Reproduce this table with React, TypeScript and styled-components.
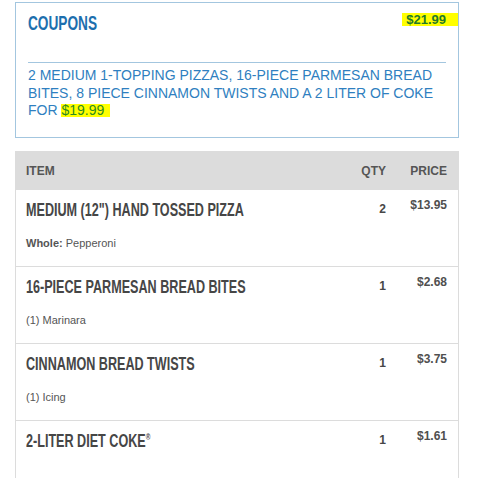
import React from "react";
import styled, { createGlobalStyle } from "styled-components";

const Global = createGlobalStyle`
  html, body {
    margin: 0;
    padding: 0;
    background: #ffffff;
    overflow: hidden;
  }
  body {
    font-family: "Liberation Sans", Arial, sans-serif;
  }
`;

const Page = styled.div`
  width: 444px;
  padding: 2px 0 0 15px;
`;

const CouponBox = styled.section`
  border: 1px solid #a3c6df;
  padding: 8px 12px 17px 12px;
`;

const CouponHead = styled.div`
  display: flex;
  justify-content: space-between;
  align-items: flex-start;
`;

const Condensed = styled.span<{ $scale: number }>`
  display: inline-block;
  white-space: nowrap;
  transform: scaleX(${(p) => p.$scale});
  transform-origin: 0 50%;
`;

const CouponTitle = styled.h2`
  margin: 0;
  font: 700 21px/24px "Liberation Sans", Arial, sans-serif;
  color: #1d6fae;
`;

const TotalPrice = styled.span`
  margin: 2px -12px 0 0;
  padding: 0 12px 0 4px;
  background: #ffff00;
  color: #22792a;
  font: 700 13px/13px "Liberation Sans", Arial, sans-serif;
`;

const Divider = styled.hr`
  margin: 27px 0 0 0;
  border: 0;
  height: 1px;
  background: #a3c6df;
`;

const Description = styled.p`
  margin: 4px 0 0 0;
  font: 400 14px/17.5px "Liberation Sans", Arial, sans-serif;
  color: #2f7fc0;
`;

const Highlight = styled.span`
  display: inline-block;
  line-height: 13px;
  background: #ffff00;
  color: #2c8a22;
  padding-right: 6px;
`;

const Table = styled.div`
  margin-top: 13px;
  border-left: 1px solid #dcdcdc;
  border-right: 1px solid #dcdcdc;
`;

const Grid = styled.div`
  display: grid;
  grid-template-columns: 1fr 30px 37px;
  column-gap: 24px;
  padding-left: 10px;
  padding-right: 11px;
`;

const HeadRow = styled(Grid)`
  background: #dcdcdc;
  padding-top: 13px;
  padding-bottom: 12px;
  font: 700 12px/14px "Liberation Sans", Arial, sans-serif;
  color: #555555;
`;

const HeadCell = styled.div<{ $right?: boolean }>`
  text-align: ${(p) => (p.$right ? "right" : "left")};
  white-space: nowrap;
`;

const ItemRow = styled(Grid)<{ $last?: boolean }>`
  padding-top: 8px;
  padding-bottom: 16px;
  min-height: ${(p) => (p.$last ? "52px" : "auto")};
  border-bottom: 1px solid #dcdcdc;
`;

const ItemCell = styled.div`
  min-width: 0;
`;

const ItemName = styled.div`
  margin-top: 2px;
  font: 700 18px/20px "Liberation Sans", Arial, sans-serif;
  color: #464646;
`;

const Reg = styled.sup`
  font-size: 9px;
  line-height: 0;
  vertical-align: 7px;
`;

const ItemSub = styled.div`
  margin-top: 17px;
  font: 400 11px/13px "Liberation Sans", Arial, sans-serif;
  color: #555555;
  b {
    font-weight: 700;
  }
`;

const Qty = styled.div`
  margin-top: 4px;
  text-align: right;
  font: 700 12px/14px "Liberation Sans", Arial, sans-serif;
  color: #474747;
`;

const Price = styled.div`
  text-align: right;
  white-space: nowrap;
  font: 700 12px/14px "Liberation Sans", Arial, sans-serif;
  color: #4f4f4f;
`;

type Item = {
  name: React.ReactNode;
  qty: number;
  price: string;
  sub?: React.ReactNode;
};

const items: Item[] = [
  {
    name: 'MEDIUM (12") HAND TOSSED PIZZA',
    qty: 2,
    price: "$13.95",
    sub: (
      <>
        <b>Whole:</b> Pepperoni
      </>
    ),
  },
  { name: "16-PIECE PARMESAN BREAD BITES", qty: 1, price: "$2.68", sub: "(1) Marinara" },
  { name: "CINNAMON BREAD TWISTS", qty: 1, price: "$3.75", sub: "(1) Icing" },
  {
    name: (
      <>
        2-LITER DIET COKE<Reg>®</Reg>
      </>
    ),
    qty: 1,
    price: "$1.61",
  },
];

export default function App() {
  return (
    <>
      <Global />
      <Page>
        <CouponBox>
          <CouponHead>
            <CouponTitle>
              <Condensed $scale={0.65}>COUPONS</Condensed>
            </CouponTitle>
            <TotalPrice>$21.99</TotalPrice>
          </CouponHead>
          <Divider />
          <Description>
            2 MEDIUM 1-TOPPING PIZZAS, 16-PIECE PARMESAN BREAD BITES, 8 PIECE CINNAMON TWISTS AND A 2
            LITER OF COKE FOR <Highlight>$19.99</Highlight>
          </Description>
        </CouponBox>
        <Table>
          <HeadRow>
            <HeadCell>ITEM</HeadCell>
            <HeadCell $right>QTY</HeadCell>
            <HeadCell $right>PRICE</HeadCell>
          </HeadRow>
          {items.map((it, i) => (
            <ItemRow key={i} $last={i === items.length - 1}>
              <ItemCell>
                <ItemName>
                  <Condensed $scale={0.7}>{it.name}</Condensed>
                </ItemName>
                {it.sub && <ItemSub>{it.sub}</ItemSub>}
              </ItemCell>
              <Qty>{it.qty}</Qty>
              <Price>{it.price}</Price>
            </ItemRow>
          ))}
        </Table>
      </Page>
    </>
  );
}
